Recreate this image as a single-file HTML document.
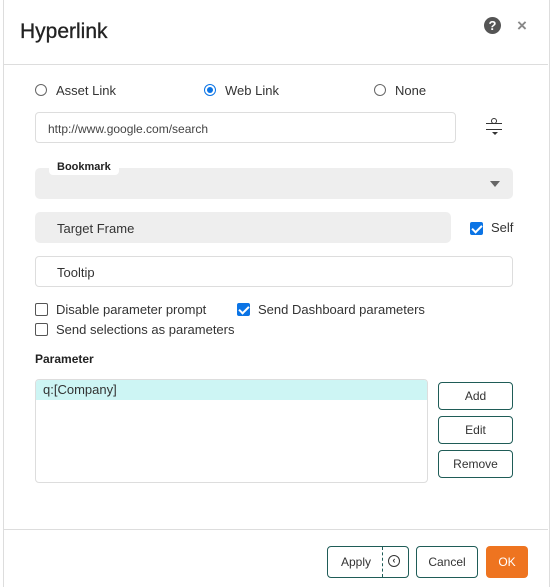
<!DOCTYPE html><html><head><style>
body{margin:0;width:550px;height:587px;background:#fff;font-family:"Liberation Sans",sans-serif;position:relative;overflow:hidden;color:#333}
.a{position:absolute}
.t{font-size:13px;color:#333}
.btn{position:absolute;border:1px solid #1f5c57;border-radius:4px;background:#fff;font-size:12px;color:#333;text-align:center;box-sizing:border-box}
.rad{position:absolute;width:12px;height:12px;border:1px solid #666;border-radius:50%;box-sizing:border-box}
.cb{position:absolute;width:13px;height:13px;border:1px solid #555;border-radius:2px;box-sizing:border-box}
.cbc{background:#0b74e5;border-color:#0b74e5}
.cbc:after{content:"";position:absolute;left:3px;top:0px;width:4px;height:8px;border:solid #fff;border-width:0 2px 2px 0;transform:rotate(45deg)}
</style></head><body>
<div class="a" style="left:3px;top:0;width:545px;height:587px;border-left:1px solid #ddd;border-right:1px solid #ddd"></div>
<div class="a" style="left:20px;top:20px;font-size:21px;color:#222;-webkit-text-stroke:0.3px #222">Hyperlink</div>
<div class="a" style="left:484px;top:17px;width:17px;height:17px;border-radius:50%;background:#555;color:#fff;font-size:13px;font-weight:bold;text-align:center;line-height:17px">?</div>
<div class="a" style="left:517px;top:16px;font-size:17px;color:#888;font-weight:bold">×</div>
<div class="a" style="left:4px;top:64px;width:544px;height:1px;background:#ddd"></div>
<div class="rad" style="left:35px;top:84px"></div><div class="a t" style="left:56px;top:83px">Asset Link</div>
<div class="rad" style="left:204px;top:84px;border-color:#0b74e5"><div style="position:absolute;left:2px;top:2px;width:6px;height:6px;border-radius:50%;background:#0b74e5"></div></div><div class="a t" style="left:225px;top:83px">Web Link</div>
<div class="rad" style="left:374px;top:84px"></div><div class="a t" style="left:395px;top:83px">None</div>
<div class="a" style="left:35px;top:112px;width:421px;height:31px;border:1px solid #ddd;border-radius:4px;box-sizing:border-box;font-size:12px;color:#444;padding:9px 0 0 12px">http://www.google.com/search</div>
<div class="a" style="left:486px;top:123px;width:16px;height:1px;background:#333"></div>
<div class="a" style="left:491px;top:118px;width:6px;height:6px;border-radius:50%;border:1.5px solid #333;box-sizing:border-box;background:#fff"></div>
<div class="a" style="left:486px;top:129px;width:16px;height:1px;background:#333"></div>
<div class="a" style="left:492px;top:132px;border:3px solid transparent;border-top:3px solid #333"></div>
<div class="a" style="left:35px;top:168px;width:478px;height:31px;background:#eee;border-radius:5px"></div>
<div class="a" style="left:49px;top:159px;background:#fff;padding:2px 8px;font-size:11px;font-weight:bold;color:#222;border-radius:4px">Bookmark</div>
<div class="a" style="left:490px;top:181px;border:5px solid transparent;border-top:6px solid #666"></div>
<div class="a" style="left:35px;top:212px;width:416px;height:31px;background:#eee;border-radius:5px;font-size:13px;padding:9px 0 0 22px;box-sizing:border-box">Target Frame</div>
<div class="cb cbc" style="left:470px;top:222px"></div><div class="a t" style="left:491px;top:220px">Self</div>
<div class="a" style="left:35px;top:256px;width:478px;height:31px;border:1px solid #ddd;border-radius:4px;box-sizing:border-box;font-size:13px;padding:8px 0 0 21px">Tooltip</div>
<div class="cb" style="left:35px;top:303px"></div><div class="a t" style="left:56px;top:302px">Disable parameter prompt</div>
<div class="cb cbc" style="left:237px;top:303px"></div><div class="a t" style="left:258px;top:302px">Send Dashboard parameters</div>
<div class="cb" style="left:35px;top:323px"></div><div class="a t" style="left:56px;top:322px">Send selections as parameters</div>
<div class="a" style="left:35px;top:352px;font-size:12px;font-weight:bold;color:#222">Parameter</div>
<div class="a" style="left:35px;top:379px;width:393px;height:104px;border:1px solid #ddd;border-radius:4px;box-sizing:border-box;overflow:hidden"><div style="height:20px;background:#cdf5f4;font-size:13px;padding:2px 0 0 7px;box-sizing:border-box">q:[Company]</div></div>
<div class="btn" style="left:438px;top:382px;width:75px;height:28px;line-height:26px">Add</div>
<div class="btn" style="left:438px;top:416px;width:75px;height:28px;line-height:26px">Edit</div>
<div class="btn" style="left:438px;top:450px;width:75px;height:28px;line-height:26px">Remove</div>
<div class="a" style="left:4px;top:529px;width:544px;height:1px;background:#ddd"></div>
<div class="btn" style="left:327px;top:546px;width:82px;height:32px;line-height:30px;text-align:left;padding-left:13px">Apply</div>
<div class="a" style="left:382px;top:547px;height:30px;border-left:1px dashed #1f5c57"></div>
<div class="a" style="left:388px;top:555px;width:12px;height:12px;border:1.5px solid #333;border-radius:50%;box-sizing:border-box;font-size:9px;line-height:9px;text-align:center;font-weight:bold">‹</div>
<div class="btn" style="left:416px;top:546px;width:62px;height:32px;line-height:30px">Cancel</div>
<div class="a" style="left:486px;top:546px;width:42px;height:32px;background:#ee7420;border-radius:4px;color:#fff;font-size:12px;text-align:center;line-height:32px">OK</div>
</body></html>
